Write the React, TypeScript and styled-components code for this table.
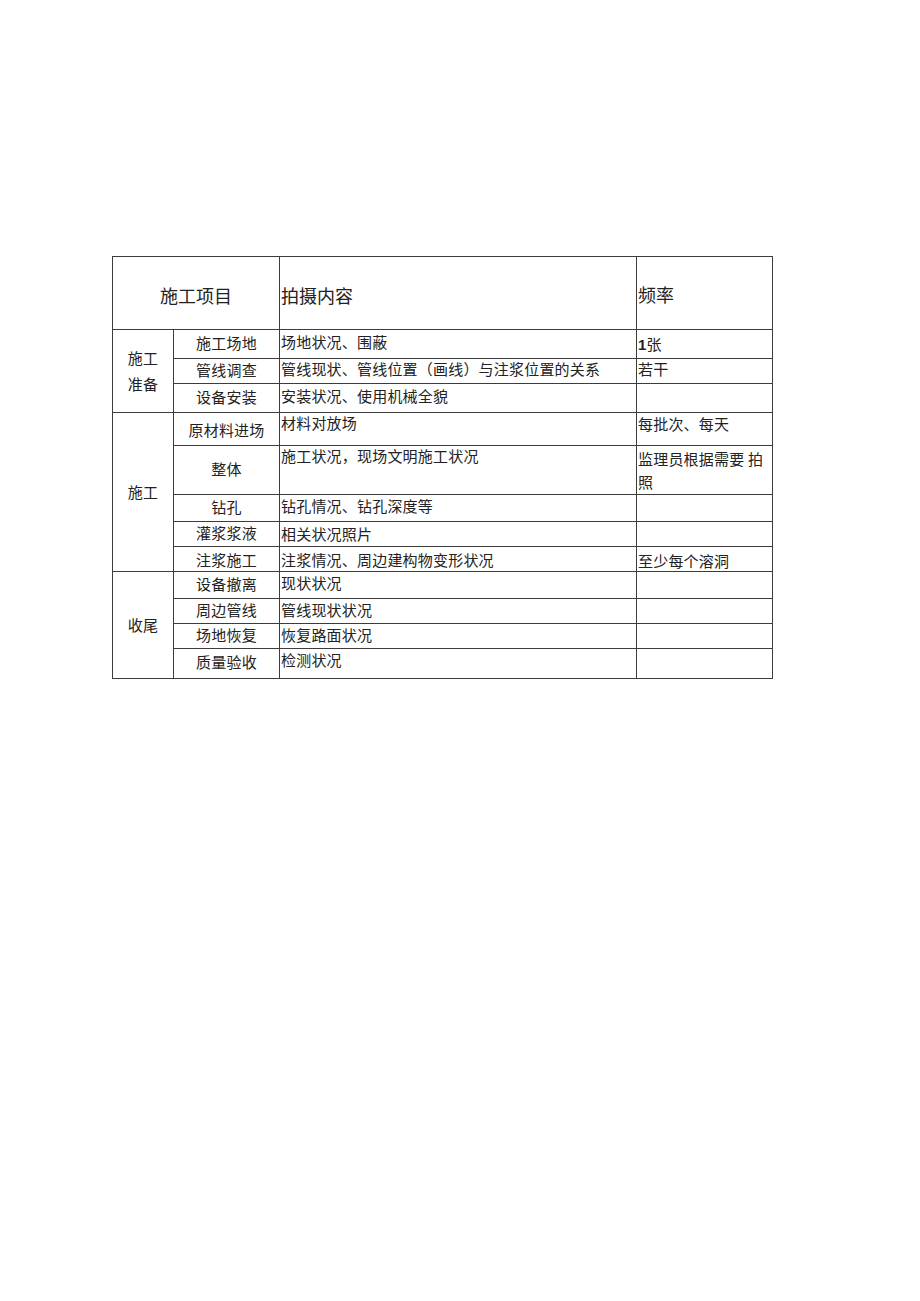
import React from "react";
import styled, { createGlobalStyle } from "styled-components";

const GlobalStyle = createGlobalStyle`
  html, body {
    margin: 0;
    padding: 0;
    background: #ffffff;
  }
  body {
    font-family: "Noto Sans CJK SC", "Liberation Serif", serif;
    color: #1e1e1e;
  }
`;

const Page = styled.div`
  width: 920px;
  min-height: 1301px;
  box-sizing: border-box;
  padding: 256px 0 0 112px;
`;

const Table = styled.table`
  border-collapse: collapse;
  table-layout: fixed;
  width: 660px;
  font-family: "Noto Sans CJK SC", serif;
  color: #222;
  text-spacing-trim: space-all;
`;

const Row = styled.tr<{ $h: number }>`
  height: ${(p) => p.$h}px;
`;

const Cell = styled.td<{
  $align?: "left" | "center";
  $valign?: "top" | "middle";
  $pt?: number;
  $size?: number;
  $lh?: number;
}>`
  border: 1px solid #3c3c3c;
  padding: ${(p) => p.$pt ?? 0}px 0 0 ${(p) => (p.$align === "center" ? 0 : 1)}px;
  text-align: ${(p) => p.$align ?? "left"};
  vertical-align: ${(p) => p.$valign ?? "top"};
  font-size: ${(p) => p.$size ?? 15}px;
  line-height: ${(p) => p.$lh ?? 20}px;
  letter-spacing: ${(p) => (p.$size ? 0 : 0.2)}px;
  white-space: nowrap;
  overflow: hidden;
  box-sizing: border-box;
`;

const Num = styled.span`
  font-family: "Liberation Sans", sans-serif;
  font-weight: bold;
`;

type Item = {
  name: string;
  content: string;
  freq?: React.ReactNode;
  h: number;
  cpt?: number;
  fpt?: number;
  npt?: number;
};

type Group = { label: React.ReactNode; items: Item[] };

const groups: Group[] = [
  {
    label: (
      <>
        施工
        <br />
        准备
      </>
    ),
    items: [
      { name: "施工场地", content: "场地状况、围蔽", freq: <><Num>1</Num>张</>, h: 29, cpt: 2, fpt: 4, npt: 0 },
      { name: "管线调查", content: "管线现状、管线位置（画线）与注浆位置的关系", freq: "若干", h: 25, cpt: 0, fpt: 0, npt: 0 },
      { name: "设备安装", content: "安装状况、使用机械全貌", h: 29, cpt: 2, npt: 0 },
    ],
  },
  {
    label: "施工",
    items: [
      { name: "原材料进场", content: "材料对放场", freq: "每批次、每天", h: 33, cpt: 0, fpt: 1, npt: 2 },
      {
        name: "整体",
        content: "施工状况，现场文明施工状况",
        freq: (
          <>
            监理员根据需要 拍
            <br />
            照
          </>
        ),
        h: 49,
        cpt: 0,
        fpt: 1,
        npt: 0,
      },
      { name: "钻孔", content: "钻孔情况、钻孔深度等", h: 27, cpt: 1, npt: 0 },
      { name: "灌浆浆液", content: "相关状况照片", h: 25, cpt: 2, npt: 0 },
      { name: "注浆施工", content: "注浆情况、周边建构物变形状况", freq: "至少每个溶洞", h: 25, cpt: 3, fpt: 4, npt: 2 },
    ],
  },
  {
    label: "收尾",
    items: [
      { name: "设备撤离", content: "现状状况", h: 27, cpt: 1, npt: 0 },
      { name: "周边管线", content: "管线现状状况", h: 25, cpt: 1, npt: 0 },
      { name: "场地恢复", content: "恢复路面状况", h: 25, cpt: 1, npt: 0 },
      { name: "质量验收", content: "检测状况", h: 30, cpt: 1, npt: 0 },
    ],
  },
];

export default function App() {
  return (
    <>
      <GlobalStyle />
      <Page>
        <Table>
          <colgroup>
            <col style={{ width: 61 }} />
            <col style={{ width: 106 }} />
            <col style={{ width: 357 }} />
            <col style={{ width: 136 }} />
          </colgroup>
          <tbody>
            <Row $h={73}>
              <Cell colSpan={2} $align="center" $valign="middle" $size={18} $pt={4} $lh={24}>
                施工项目
              </Cell>
              <Cell $valign="middle" $size={18} $pt={4} $lh={24}>
                拍摄内容
              </Cell>
              <Cell $valign="middle" $size={18} $pt={1} $lh={24}>
                频率
              </Cell>
            </Row>
            {groups.map((g, gi) =>
              g.items.map((it, i) => (
                <Row key={`${gi}-${i}`} $h={it.h}>
                  {i === 0 && (
                    <Cell rowSpan={g.items.length} $align="center" $valign="middle" $pt={0} $lh={26}>
                      {g.label}
                    </Cell>
                  )}
                  <Cell $align="center" $pt={Math.max(0, Math.round((it.h - 20) / 2) - 2 + (it.npt ?? 0))}>
                    {it.name}
                  </Cell>
                  <Cell $pt={it.cpt}>{it.content}</Cell>
                  <Cell $pt={it.fpt} $lh={it.name === "整体" ? 23 : 20}>
                    {it.freq ?? ""}
                  </Cell>
                </Row>
              ))
            )}
          </tbody>
        </Table>
      </Page>
    </>
  );
}
